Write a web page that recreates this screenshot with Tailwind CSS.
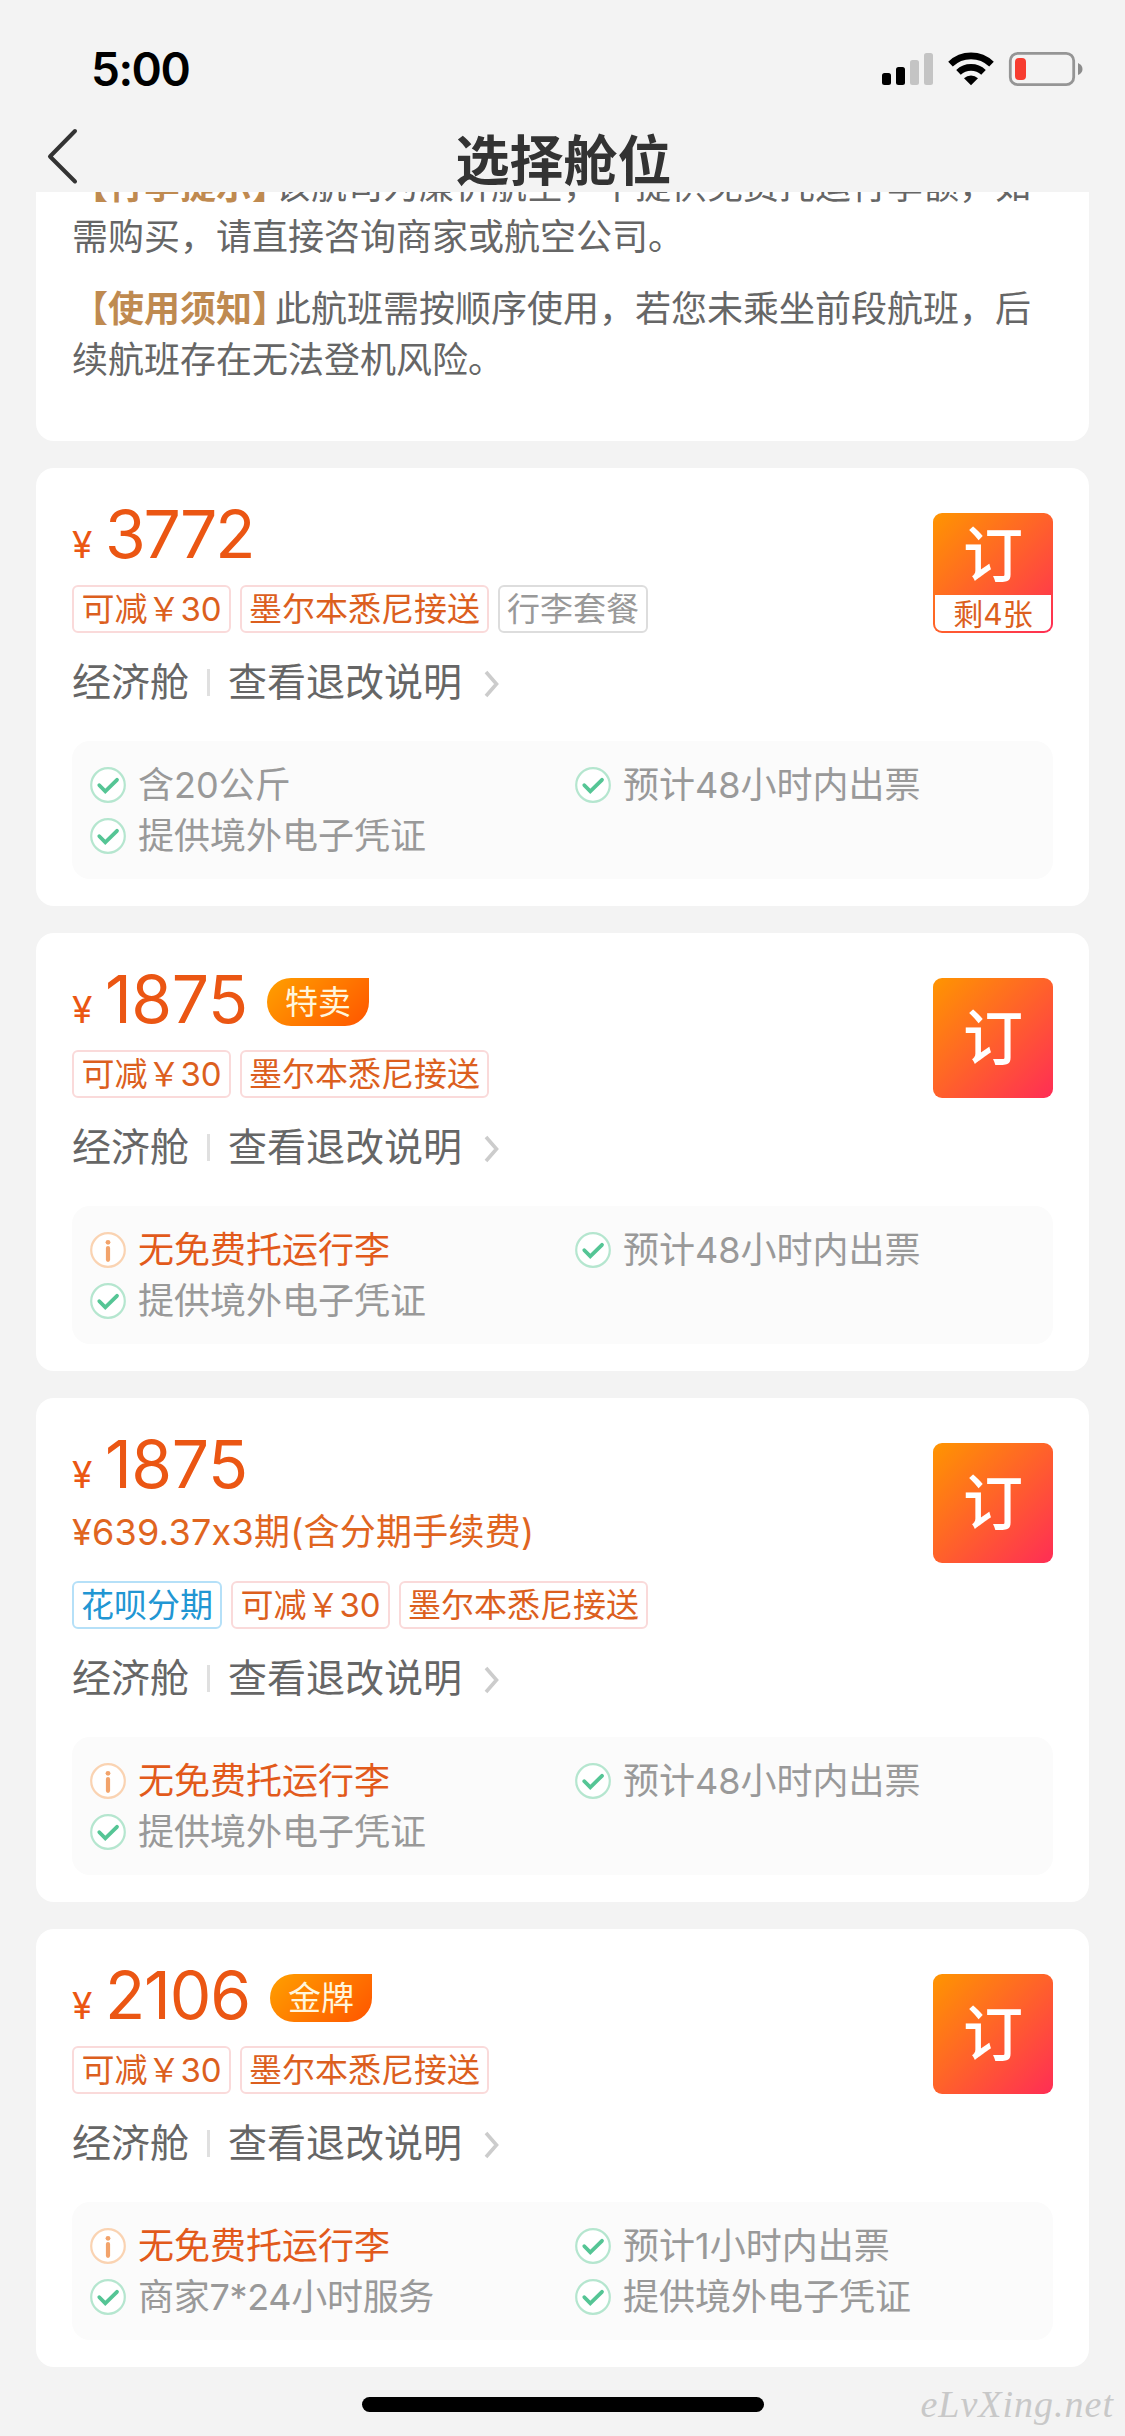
<!DOCTYPE html>
<html lang="zh-CN">
<head>
    <meta charset="UTF-8">
    <meta name="viewport" content="width=device-width, initial-scale=1.0">
    <title>选择舱位</title>
    <script src="https://cdn.jsdelivr.net/npm/@tailwindcss/browser@4"></script>
</head>
<body class="bg-[#f3f3f3] font-['Inter','Noto_Sans_CJK_SC',sans-serif] text-[#666] [font-feature-settings:'calt'_0]">

    <!-- Icons -->
    <svg class="hidden">
        <symbol id="ok" viewBox="0 0 36 36">
            <circle cx="18" cy="18" r="16.8" fill="#fff" stroke="#b5e6cf" stroke-width="2.2"/>
            <path d="M9.3 18.2l6 6.2L27 12.8" fill="none" stroke="#55c595" stroke-width="3.8" stroke-linecap="round"/>
        </symbol>
        <symbol id="info" viewBox="0 0 36 36">
            <circle cx="18" cy="18" r="16.8" fill="#fff" stroke="#fad3b2" stroke-width="2.2"/>
            <circle cx="18" cy="10.3" r="2.4" fill="#f2a36b"/>
            <path d="M18 16v11.8" stroke="#f2a36b" stroke-width="4.2" stroke-linecap="round"/>
        </symbol>
        <symbol id="arrow" viewBox="0 0 18 30">
            <path d="M4 3l10.500 12L4 27" fill="none" stroke="#ccc" stroke-width="3.600"/>
        </symbol>
    </svg>

    <div class="relative flex h-[2436px] w-[1125px] flex-col overflow-hidden">

        <!-- Header -->
        <header class="h-[192px] shrink-0">
            <div class="flex h-[114px] items-start justify-between pl-[91px] pr-[42px]">
                <span class="mt-[45px] text-[46px] font-semibold leading-[48px] tracking-[-1.5px] text-black">5:00</span>
                <svg class="mt-[48px] h-[42px] w-[202px]" viewBox="0 0 202 42">
                    <rect x="1" y="25" width="9" height="12" rx="2.5" fill="#000"/>
                    <rect x="15" y="19" width="9" height="18" rx="2.5" fill="#000"/>
                    <rect x="29" y="12" width="9" height="25" rx="2.5" fill="#c4c4c4"/>
                    <rect x="43" y="5" width="9" height="32" rx="2.5" fill="#c4c4c4"/>
                    <g fill="none" stroke="#000" stroke-width="6.6">
                        <path d="M69.5 16.2A29.5 29.5 0 0 1 110.5 16.2"/>
                        <path d="M77.5 24.3A18.2 18.2 0 0 1 102.500 24.3"/>
                    </g>
                    <path d="M90 37.200L83 30.200A10.500 10.500 0 0 1 97 30.200Z" fill="#000"/>
                    <rect x="129.300" y="5.300" width="63.400" height="31.400" rx="7.500" fill="none" stroke="#959595" stroke-width="2.800"/>
                    <rect x="134" y="10" width="11" height="22" rx="4" fill="#f73c30"/>
                    <path d="M197 15v12q4.500-2 4.500-6t-4.500-6Z" fill="#8c8c8c"/>
                </svg>
            </div>
            <div class="grid h-[78px] grid-cols-[1fr_auto_1fr] items-start">
                <svg class="ml-[45px] mt-[12px] h-[60px] w-[34px]" viewBox="0 0 34 60" fill="none" stroke="#333" stroke-width="4" stroke-linecap="round" stroke-linejoin="round">
                    <path d="M30 5L5 30.500L30 55.500"/>
                </svg>
                <h1 class="mt-[18px] pl-[2px] text-[54px] font-bold leading-[60px] text-[#333]">选择舱位</h1>
            </div>
        </header>

        <main class="flex flex-col gap-[27px] px-9">

            <!-- Notice -->
            <section class="h-[249px] overflow-hidden rounded-b-[18px] bg-white px-9 text-[36px] leading-[51px]">
                <p class="-mt-[31px] whitespace-nowrap"><b class="-mr-[13px] font-bold text-[#bf8a50]">【行李提示】</b>该航司为廉价航空，不提供免费托运行李额，如<br>需购买，请直接咨询商家或航空公司。</p>
                <p class="mt-[21px] whitespace-nowrap"><b class="-mr-[13px] font-bold text-[#bf8a50]">【使用须知】</b>此航班需按顺序使用，若您未乘坐前段航班，后<br>续航班存在无法登机风险。</p>
            </section>

            <!-- 3772 -->
            <section class="h-[438px] rounded-[18px] bg-white px-9 pt-[45px]">
                <div class="flex justify-between">
                    <div>
                        <div class="flex h-[72px] items-start text-[#eb5613]">
                            <div class="leading-[43px]"><span class="inline-block w-[33px] text-[37px]">¥</span><span class="text-[66px] tracking-[-2.2px]">3772</span></div>
                        </div>
                        <div class="flex gap-[9px] text-[33px] leading-[44px] text-[#dc5f1e]">
                            <span class="w-[159px] rounded-md border-2 border-[#fadada] text-center">可减￥30</span>
                            <span class="rounded-md border-2 border-[#fadada] px-[7px]">墨尔本悉尼接送</span>
                            <span class="rounded-md border-2 border-[#ddd] px-[7px] text-[#999]">行李套餐</span>
                        </div>
                    </div>
                    <div class="h-[120px] w-[120px] rounded-[9px] bg-[linear-gradient(135deg,#ff9500,#ff2d55)] p-[2px] text-center">
                        <div class="h-[80px] pt-[10px] text-[60px] font-medium leading-[60px] text-white">订</div>
                        <div class="h-[36px] rounded-b-[7px] bg-white text-[30px] leading-[38px] text-[#dc5f1e]">剩4张</div>
                    </div>
                </div>
                <div class="flex h-[98px] items-center text-[39px]">
                    <span>经济舱</span>
                    <i class="ml-[18px] mr-[18px] h-[27px] w-[3px] bg-[#e0e0e0]"></i>
                    <span>查看退改说明</span>
                    <svg class="ml-[20px] mt-[3px] h-[30px] w-[18px]"><use href="#arrow"/></svg>
                </div>
                <div class="mt-[10px] grid h-[138px] grid-cols-[485px_1fr] rounded-[18px] bg-[#fbfbfb] p-[18px] text-[36px] leading-[49px] text-[#999]">
                    <div class="flex items-center gap-3"><svg class="h-9 w-9"><use href="#ok"/></svg><span class="pt-[2px]">含20公斤</span></div>
                    <div class="flex items-center gap-3"><svg class="h-9 w-9"><use href="#ok"/></svg><span class="pt-[2px]">预计48小时内出票</span></div>
                    <div class="flex items-center gap-3"><svg class="h-9 w-9"><use href="#ok"/></svg><span class="pt-[2px]">提供境外电子凭证</span></div>
                </div>
            </section>

            <!-- 1875 特卖 -->
            <section class="h-[438px] rounded-[18px] bg-white px-9 pt-[45px]">
                <div class="flex justify-between">
                    <div>
                        <div class="flex h-[72px] items-start text-[#eb5613]">
                            <div class="w-[195px] leading-[43px]"><span class="inline-block w-[33px] text-[37px]">¥</span><span class="text-[66px] tracking-[-0.5px]">1875</span></div>
                            <span class="rounded-[24px] rounded-tr-none bg-[linear-gradient(135deg,#ffa000,#ff5500)] px-[18px] text-[33px] leading-[48px] text-[#fff6dc]">特卖</span>
                        </div>
                        <div class="flex gap-[9px] text-[33px] leading-[44px] text-[#dc5f1e]">
                            <span class="w-[159px] rounded-md border-2 border-[#fadada] text-center">可减￥30</span>
                            <span class="rounded-md border-2 border-[#fadada] px-[7px]">墨尔本悉尼接送</span>
                        </div>
                    </div>
                    <div class="h-[120px] w-[120px] rounded-[9px] bg-[linear-gradient(135deg,#ff9500,#ff2d55)] text-center text-[60px] font-medium leading-[120px] text-white">订</div>
                </div>
                <div class="flex h-[98px] items-center text-[39px]">
                    <span>经济舱</span>
                    <i class="ml-[18px] mr-[18px] h-[27px] w-[3px] bg-[#e0e0e0]"></i>
                    <span>查看退改说明</span>
                    <svg class="ml-[20px] mt-[3px] h-[30px] w-[18px]"><use href="#arrow"/></svg>
                </div>
                <div class="mt-[10px] grid h-[138px] grid-cols-[485px_1fr] rounded-[18px] bg-[#fbfbfb] p-[18px] text-[36px] leading-[49px] text-[#999]">
                    <div class="flex items-center gap-3 text-[#e25a1b]"><svg class="h-9 w-9"><use href="#info"/></svg><span class="pt-[2px]">无免费托运行李</span></div>
                    <div class="flex items-center gap-3"><svg class="h-9 w-9"><use href="#ok"/></svg><span class="pt-[2px]">预计48小时内出票</span></div>
                    <div class="flex items-center gap-3"><svg class="h-9 w-9"><use href="#ok"/></svg><span class="pt-[2px]">提供境外电子凭证</span></div>
                </div>
            </section>

            <!-- 1875 花呗分期 -->
            <section class="h-[504px] rounded-[18px] bg-white px-9 pt-[45px]">
                <div class="flex justify-between">
                    <div>
                        <div class="flex h-[72px] items-start text-[#eb5613]">
                            <div class="leading-[43px]"><span class="inline-block w-[33px] text-[37px]">¥</span><span class="text-[66px] tracking-[-0.5px]">1875</span></div>
                        </div>
                        <div class="h-[66px] text-[36px] leading-[35px] tracking-[0.25px] text-[#e0651f]">¥639.37x3期(含分期手续费)</div>
                        <div class="flex gap-[9px] text-[33px] leading-[44px] text-[#dc5f1e]">
                            <span class="rounded-md border-2 border-[#b5e0f8] px-[7px] text-[#2196d3]">花呗分期</span>
                            <span class="w-[159px] rounded-md border-2 border-[#fadada] text-center">可减￥30</span>
                            <span class="rounded-md border-2 border-[#fadada] px-[7px]">墨尔本悉尼接送</span>
                        </div>
                    </div>
                    <div class="h-[120px] w-[120px] rounded-[9px] bg-[linear-gradient(135deg,#ff9500,#ff2d55)] text-center text-[60px] font-medium leading-[120px] text-white">订</div>
                </div>
                <div class="flex h-[98px] items-center text-[39px]">
                    <span>经济舱</span>
                    <i class="ml-[18px] mr-[18px] h-[27px] w-[3px] bg-[#e0e0e0]"></i>
                    <span>查看退改说明</span>
                    <svg class="ml-[20px] mt-[3px] h-[30px] w-[18px]"><use href="#arrow"/></svg>
                </div>
                <div class="mt-[10px] grid h-[138px] grid-cols-[485px_1fr] rounded-[18px] bg-[#fbfbfb] p-[18px] text-[36px] leading-[49px] text-[#999]">
                    <div class="flex items-center gap-3 text-[#e25a1b]"><svg class="h-9 w-9"><use href="#info"/></svg><span class="pt-[2px]">无免费托运行李</span></div>
                    <div class="flex items-center gap-3"><svg class="h-9 w-9"><use href="#ok"/></svg><span class="pt-[2px]">预计48小时内出票</span></div>
                    <div class="flex items-center gap-3"><svg class="h-9 w-9"><use href="#ok"/></svg><span class="pt-[2px]">提供境外电子凭证</span></div>
                </div>
            </section>

            <!-- 2106 金牌 -->
            <section class="h-[438px] rounded-[18px] bg-white px-9 pt-[45px]">
                <div class="flex justify-between">
                    <div>
                        <div class="flex h-[72px] items-start text-[#eb5613]">
                            <div class="w-[198px] leading-[43px]"><span class="inline-block w-[33px] text-[37px]">¥</span><span class="text-[66px] tracking-[-1.2px]">2106</span></div>
                            <span class="rounded-[24px] rounded-tr-none bg-[linear-gradient(135deg,#ffa000,#ff5500)] px-[18px] text-[33px] leading-[48px] text-[#fff6dc]">金牌</span>
                        </div>
                        <div class="flex gap-[9px] text-[33px] leading-[44px] text-[#dc5f1e]">
                            <span class="w-[159px] rounded-md border-2 border-[#fadada] text-center">可减￥30</span>
                            <span class="rounded-md border-2 border-[#fadada] px-[7px]">墨尔本悉尼接送</span>
                        </div>
                    </div>
                    <div class="h-[120px] w-[120px] rounded-[9px] bg-[linear-gradient(135deg,#ff9500,#ff2d55)] text-center text-[60px] font-medium leading-[120px] text-white">订</div>
                </div>
                <div class="flex h-[98px] items-center text-[39px]">
                    <span>经济舱</span>
                    <i class="ml-[18px] mr-[18px] h-[27px] w-[3px] bg-[#e0e0e0]"></i>
                    <span>查看退改说明</span>
                    <svg class="ml-[20px] mt-[3px] h-[30px] w-[18px]"><use href="#arrow"/></svg>
                </div>
                <div class="mt-[10px] grid h-[138px] grid-cols-[485px_1fr] rounded-[18px] bg-[#fbfbfb] p-[18px] text-[36px] leading-[49px] text-[#999]">
                    <div class="flex items-center gap-3 text-[#e25a1b]"><svg class="h-9 w-9"><use href="#info"/></svg><span class="pt-[2px]">无免费托运行李</span></div>
                    <div class="flex items-center gap-3"><svg class="h-9 w-9"><use href="#ok"/></svg><span class="pt-[2px]">预计1小时内出票</span></div>
                    <div class="flex items-center gap-3"><svg class="h-9 w-9"><use href="#ok"/></svg><span class="pt-[2px] tracking-[-0.3px]">商家7*24小时服务</span></div>
                    <div class="flex items-center gap-3"><svg class="h-9 w-9"><use href="#ok"/></svg><span class="pt-[2px]">提供境外电子凭证</span></div>
                </div>
            </section>
        </main>

        <!-- Home indicator -->
        <div class="mx-auto mt-[30px] h-[15px] w-[402px] shrink-0 rounded-full bg-black"></div>

        <!-- Watermark -->
        <div class="absolute bottom-[8px] right-[11px] font-['Liberation_Serif',serif] text-[38px] italic leading-[48px] tracking-[1px] text-[#c8c8c8]">eLvXing.net</div>
    </div>
</body>
</html>
